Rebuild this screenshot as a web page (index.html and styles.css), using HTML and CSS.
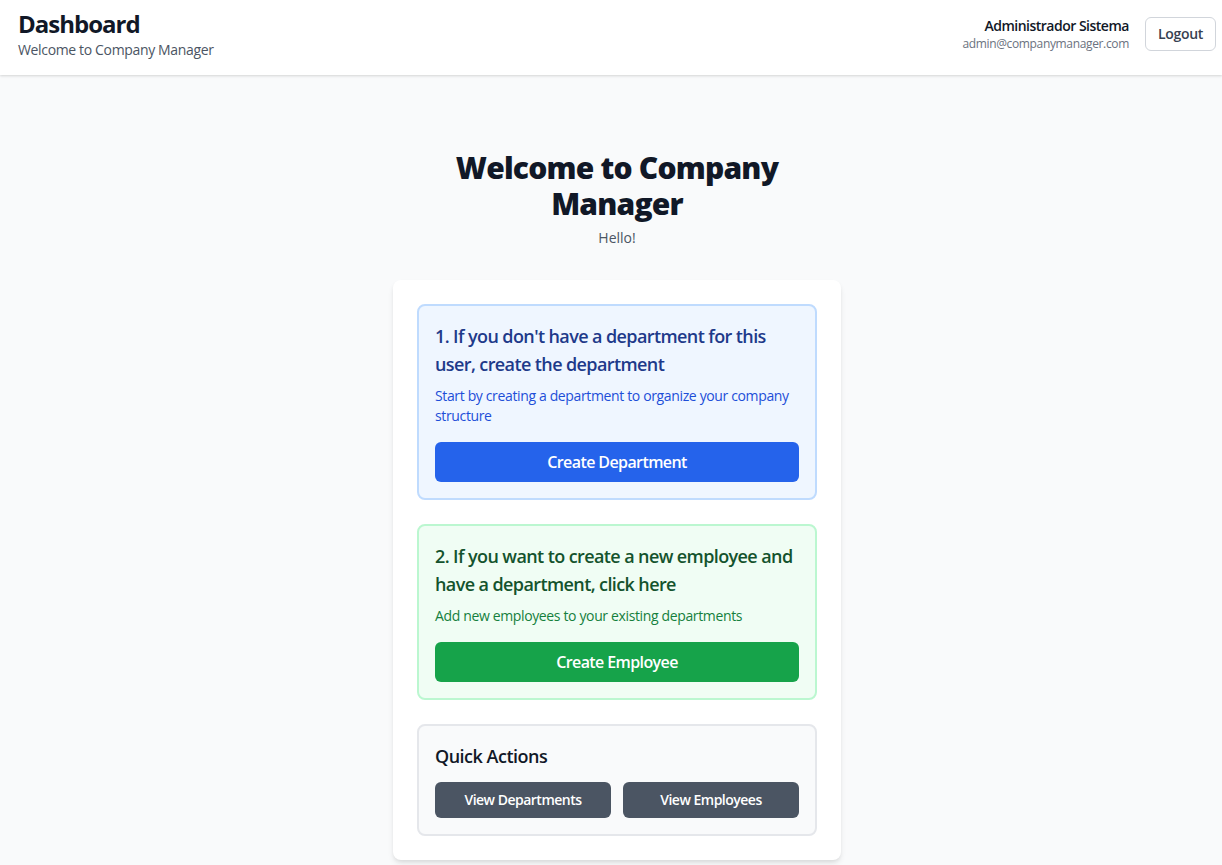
FILE: index.html
```html
<!DOCTYPE html>
<html lang="en">
<head>
<meta charset="utf-8">
<title>Dashboard</title>
<link rel="stylesheet" href="styles.css">
</head>
<body>
<header class="topbar">
  <div class="brand">
    <h1 class="brand-title">Dashboard</h1>
    <p class="brand-sub">Welcome to Company Manager</p>
  </div>
  <div class="user-area">
    <div class="user-info">
      <div class="user-name">Administrador Sistema</div>
      <div class="user-email">admin@companymanager.com</div>
    </div>
    <button class="btn-logout">Logout</button>
  </div>
</header>
<main class="main">
  <div class="wrap">
    <h2 class="hero-title">Welcome to Company Manager</h2>
    <p class="hero-sub">Hello!</p>
    <div class="panel">
      <section class="step step-blue">
        <h3 class="step-title">1. If you don't have a department for this user, create the department</h3>
        <p class="step-desc">Start by creating a department to organize your company structure</p>
        <button class="btn btn-blue">Create Department</button>
      </section>
      <section class="step step-green">
        <h3 class="step-title">2. If you want to create a new employee and have a department, click here</h3>
        <p class="step-desc">Add new employees to your existing departments</p>
        <button class="btn btn-green">Create Employee</button>
      </section>
      <section class="step step-gray">
        <h3 class="step-title qa-title">Quick Actions</h3>
        <div class="qa-grid">
          <button class="btn-qa">View Departments</button>
          <button class="btn-qa">View Employees</button>
        </div>
      </section>
    </div>
  </div>
</main>
</body>
</html>
```
FILE: styles.css
```css
* { box-sizing: border-box; }
html, body { margin: 0; padding: 0; }
body {
  font-family: "Open Sans", "Noto Sans", sans-serif;
  background: #f9fafb;
  color: #111827;
  min-height: 865px;
}
h1, h2, h3, p { margin: 0; }
button { font-family: inherit; cursor: pointer; }

.topbar {
  background: #ffffff;
  box-shadow: 0 1px 3px rgba(0,0,0,0.1), 0 1px 2px rgba(0,0,0,0.06);
  display: flex;
  justify-content: space-between;
  align-items: center;
  padding: 8px 6px 15px 18px;
  position: relative;
}
.brand-title {
  font-size: 24px;
  line-height: 32px;
  font-weight: 700;
  color: #111827;
  letter-spacing: -1px;
}
.brand-sub {
  font-size: 14px;
  line-height: 20px;
  color: #4b5563;
  letter-spacing: -0.35px;
}
.user-area {
  display: flex;
  align-items: center;
  gap: 16px;
}
.user-info { text-align: right; }
.user-name {
  font-size: 14px;
  line-height: 20px;
  font-weight: 600;
  color: #111827;
  letter-spacing: -0.5px;
}
.user-email {
  font-size: 12px;
  line-height: 16px;
  color: #6b7280;
  letter-spacing: -0.35px;
}
.btn-logout {
  background: #fff;
  border: 1px solid #d1d5db;
  border-radius: 6px;
  padding: 6px 12px;
  font-size: 14px;
  line-height: 20px;
  font-weight: 600;
  color: #374151;
  letter-spacing: -0.3px;
}

.main {
  padding: 73px 4px 48px 16px;
  display: flex;
  justify-content: center;
}
.wrap {
  width: 448px;
}
.hero-title {
  font-size: 30px;
  line-height: 36px;
  font-weight: 800;
  text-align: center;
  color: #111827;
  padding: 2px 56px 0;
  letter-spacing: -0.8px;
}
.hero-sub {
  margin-top: 6px;
  text-align: center;
  font-size: 14px;
  line-height: 20px;
  color: #4b5563;
}
.panel {
  margin-top: 32px;
  background: #fff;
  border-radius: 8px;
  box-shadow: 0 4px 6px -1px rgba(0,0,0,0.1), 0 2px 4px -1px rgba(0,0,0,0.06);
  padding: 24px;
  display: flex;
  flex-direction: column;
  gap: 24px;
}
.step {
  border: 2px solid;
  border-radius: 8px;
  padding: 16px;
}
.step-title {
  font-size: 18px;
  line-height: 28px;
  font-weight: 600;
  margin-bottom: 8px;
  letter-spacing: -0.6px;
}
.step-desc {
  font-size: 14px;
  line-height: 20px;
  margin-bottom: 16px;
  letter-spacing: -0.36px;
}
.btn {
  display: block;
  width: 100%;
  border: none;
  border-radius: 6px;
  padding: 8px 16px;
  font-size: 16px;
  line-height: 24px;
  font-weight: 600;
  color: #fff;
  letter-spacing: -0.6px;
}
.step-blue { background: #eff6ff; border-color: #bfdbfe; }
.step-blue .step-title { color: #1e3a8a; }
.step-blue .step-desc { color: #1d4ed8; }
.btn-blue { background: #2563eb; }

.step-green { background: #f0fdf4; border-color: #bbf7d0; }
.step-green .step-title { color: #14532d; }
.step-green .step-desc { color: #15803d; }
.btn-green { background: #16a34a; }

.step-gray { background: #f9fafb; border-color: #e5e7eb; }
.qa-title { color: #111827; margin-bottom: 12px; letter-spacing: -0.5px; }
.qa-grid {
  display: grid;
  grid-template-columns: 1fr 1fr;
  gap: 12px;
}
.btn-qa {
  background: #4b5563;
  color: #fff;
  border: none;
  border-radius: 6px;
  padding: 8px 12px;
  font-size: 14px;
  line-height: 20px;
  font-weight: 600;
  letter-spacing: -0.5px;
}
```
